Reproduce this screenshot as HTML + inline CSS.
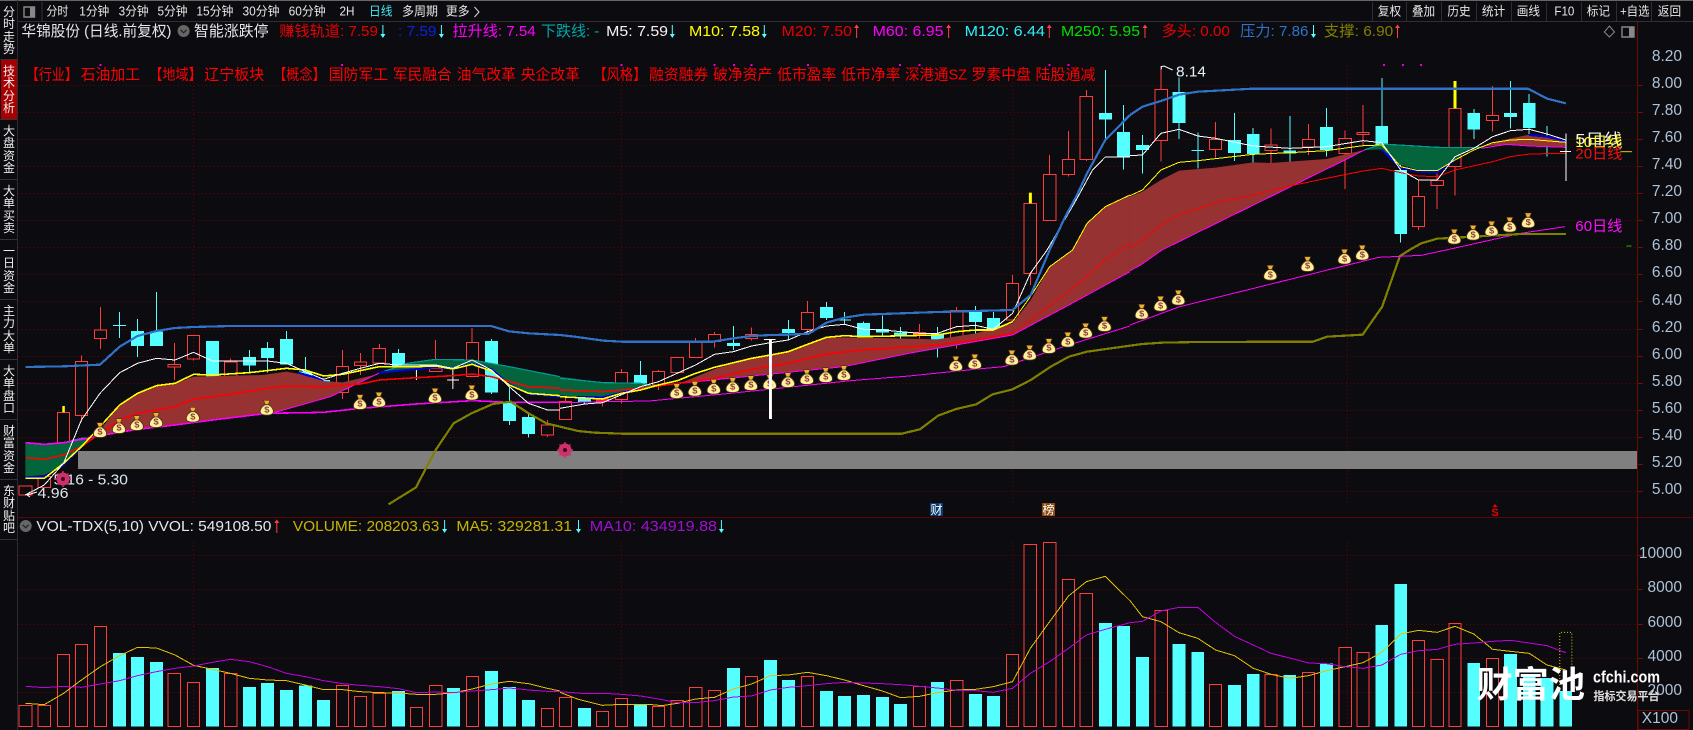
<!DOCTYPE html>
<html><head><meta charset="utf-8"><title>K</title>
<style>
html,body{margin:0;padding:0;background:#0c0c10;width:1693px;height:730px;overflow:hidden}
svg{position:absolute;left:0;top:0;font-family:"Liberation Sans","Noto Sans CJK SC",sans-serif}
path,polyline,polygon,line,rect,circle{vector-effect:non-scaling-stroke}
.side{position:absolute;left:3px;width:12px;font:12px/12.3px "Liberation Sans","Noto Sans CJK SC",sans-serif;color:#eee;text-align:center}
.r{fill:none;stroke:#ff3c3c;stroke-width:1;shape-rendering:crispEdges}
.rf{fill:#ff2020;stroke:#ff3c3c;stroke-width:1;shape-rendering:crispEdges}
.c{fill:#55ffff;stroke:none;shape-rendering:crispEdges}
.w{fill:none;stroke:#55ffff;stroke-width:1;shape-rendering:crispEdges}
.l{fill:none;stroke-linejoin:round;shape-rendering:crispEdges}
.bl{stroke:#2f72c8;stroke-width:2.2}.wh{stroke:#fff;stroke-width:1}.ye{stroke:#ffff00;stroke-width:1}.re{stroke:#ff0000;stroke-width:1}.ma{stroke:#ff00ff;stroke-width:1}.ol{stroke:#808000;stroke-width:2.2}.db{stroke:#0000e0;stroke-width:2}.te{stroke:#009a9a;stroke-width:1.2}
.th{stroke-width:1.6}
.v5{stroke:#e6c000;stroke-width:1}.v10{stroke:#c000e0;stroke-width:1}
.br{fill:#963232}.gr{fill:#04643c}
.b{fill:#fff09a;stroke:#4a3015;stroke-width:.8}.k{fill:#f0b030;stroke:#4a3015;stroke-width:.6}
.d{fill:#8a3a3a;font-size:26px;font-weight:bold;text-anchor:middle}
.gh{stroke:#6a0404;stroke-width:1;stroke-dasharray:1 3;fill:none}
.tb{fill:#e6e6e6;font-size:12.5px}
.t2{font-size:15px}
.t3{font-size:15px;fill:#ff0000}
.ax{fill:#aec2d8;font-size:15.5px;text-anchor:end}
</style></head><body>
<svg width="1693" height="730" viewBox="0 0 1693 730" xmlns="http://www.w3.org/2000/svg">
<rect x="0" y="0" width="1693" height="730" fill="#0c0c10"/>
<rect x="0" y="0" width="1693" height="1" fill="#666"/>
<rect x="17" y="21" width="1676" height="1" fill="#303034"/>
<rect x="17" y="0" width="1" height="730" fill="#2c2c30"/>
<rect x="1" y="59.5" width="16" height="60" fill="#a80000"/>
<path d="M0 59.5H17M0 119.5H17M0 179.5H17M0 239.5H17M0 299.5H17M0 359.5H17M0 419.5H17M0 479.5H17M0 539.5H17" stroke="#333" fill="none"/>
<rect x="41.5" y="2" width="1" height="19" fill="#333"/>
<path d="M24 7H34.5V17H24Z" fill="none" stroke="#888" stroke-width="1.4"/><rect x="30" y="7" width="4.5" height="10" fill="#888"/>

<!-- grid -->
<path class="gh" d="M18 85.5H1637M18 112.5H1637M18 139.5H1637M18 166.5H1637M18 193.5H1637M18 220.5H1637M18 247.5H1637M18 274.5H1637M18 301.5H1637M18 329.5H1637M18 356.5H1637M18 383.5H1637M18 410.5H1637M18 437.5H1637M18 491.5H1637M18 555.5H1637M18 589.5H1637M18 624.5H1637M18 658.5H1637M18 692.5H1637"/>
<path class="gh" d="M193.5 66V503M621.5 66V503M1012.5 66V503M1347.5 66V503M193.5 542V726M621.5 542V726M1012.5 542V726M1347.5 542V726"/>
<rect x="18" y="517" width="1675" height="1" fill="#5a0606"/>
<rect x="1637" y="22" width="1" height="708" fill="#6e0808"/>
<rect x="78" y="451" width="1559" height="18" fill="#808080"/>
<path d="M1638 85.5h5M1638 112.5h5M1638 139.5h5M1638 166.5h5M1638 193.5h5M1638 220.5h5M1638 247.5h5M1638 274.5h5M1638 301.5h5M1638 329.5h5M1638 356.5h5M1638 383.5h5M1638 410.5h5M1638 437.5h5M1638 464.5h5M1638 491.5h5M1638 555.5h5M1638 589.5h5M1638 624.5h5M1638 658.5h5M1638 692.5h5" stroke="#7a0808" fill="none"/>

<!-- candles G1 lower -->
<g transform="translate(0,250) scale(.35714,.33333)">
<path class="r" d="M53 708H89V735H53ZM107 679H142V713H107ZM161 487H195V580H161ZM211 334H245V497H211ZM228 316V334M228 497V516M264 240H298V266H264ZM281 171V240M281 266V297M471 343H505V351H471ZM488 279V343M488 351V390M525 256H559V327H525ZM542 327V331M628 336H663V380H628ZM645 325V336M942 349H976V428H942ZM959 300V349M959 428V447M992 336H1026V347H992ZM1009 309V336M1009 347V375M1045 295H1080V339H1045ZM1062 282V295M1202 355H1237V365H1202ZM1219 270V355M1306 277H1340V380H1306ZM1322 234V277M1516 525H1550V555H1516ZM1533 510V525M1533 555V561"/>
<path class="c" d="M367 243H403V288H367ZM420 245H456V288H420ZM577 273H613V400H577ZM680 321H717V347H680ZM731 294H767V324H731ZM784 267H820V343H784ZM837 365H873V385H837ZM888 390H924V443H888ZM1098 309H1134V350H1098ZM1358 273H1394V427H1358ZM1408 455H1445V513H1408ZM1462 501H1498V552H1462Z"/>
<path class="w" d="M334 186V264M316 226H353M385 207V321M438 126V245M698 300V368M749 276V368M802 243V267M855 321V365M1116 297V309M1376 267V273M1376 427V432M1426 410V455M1426 513V525M1480 490V501M1480 552V563"/>
<path d="M1166 360V390M1268 360V417M1252 390H1285" stroke="#fff" fill="none" stroke-width="1"/>
<path d="M178 468V487" stroke="#ffff00" stroke-width="2.5"/>
</g>
<!-- candles G2 lower -->
<g transform="translate(560,250) scale(.3635,.33333)">
<path class="r" d="M-2 455H32V508H-2ZM15 440V455M152 367H186V449H152ZM169 357V367M169 449V460M254 364H288V405H254ZM271 360V364M271 405V420M306 322H340V368H306ZM356 276H390V323H356ZM373 264V276M408 253H442V275H408ZM425 246V253M425 275V293M510 253H544V266H510ZM527 232V253M527 266V272M664 187H698V239H664ZM681 153V187M681 239V248M1074 181H1108V270H1074ZM1091 171V181M1091 270V296M1228 100H1262V210H1228ZM1245 75V100M117 455V470M989 222V265"/>
<path class="rf" d="M100 447H134V455H100ZM972 248H1006V255H972Z"/>
<path class="c" d="M50 442H85V456H50ZM204 375H240V400H204ZM459 279H495V288H459ZM611 237H646V249H611ZM715 171H751V204H715ZM817 219H853V263H817ZM869 237H905V248H869ZM919 248H955V255H919ZM1021 250H1056V270H1021ZM1125 186H1161V216H1125ZM1175 204H1210V238H1175Z"/>
<path class="w" d="M68 456V462M222 333V375M477 228V279M477 288V300M628 210V237M628 249V270M733 156V171M733 204V210M783 186V225M765 210H801M835 215V219M887 196V237M887 248V260M937 231V248M937 255V265M1038 231V250M1038 270V323M1143 168V186M1143 216V250M1192 186V204"/>
</g>
<!-- candles G2 top -->
<g transform="translate(560,0) scale(.3635,.33333)">
<path class="r" d="M1277 610H1311V820H1277ZM1294 820V855M1330 523H1364V661H1330ZM1347 465V523M1382 478H1416V523H1382ZM1399 393V478M1399 523V530M1431 289H1465V478H1431ZM1448 270V289M1448 478V483"/>
<path d="M1294 578V610" stroke="#ffff00" stroke-width="3"/>
<path class="c" d="M1483 339H1518V359H1483ZM1532 396H1568V471H1532Z"/>
<path class="w" d="M1500 210V339M1500 359V418M1550 315V396M1550 471V508"/>
</g>
<!-- candles G3 top -->
<g transform="translate(1130,0) scale(.35518,.33333)">
<path class="r" d="M70 268H105V421H70ZM87 198V268M87 421V485M224 418H258V449H224ZM241 366V418M241 449V472M380 435H414V452H380ZM397 385V435M397 452V489M486 418H520V441H486ZM503 372V418M503 441V465M589 415H623V460H589ZM606 392V415M606 460V567M639 397H673V404H639ZM656 315V397M656 404V440M795 589H829V680H795ZM812 540V589M812 680V690M848 541H882V557H848ZM865 520V541M865 557V627M898 325H932V500H898ZM915 500V587M1004 346H1038V362H1004ZM1021 258V346M1021 362V395"/>
<path class="c" d="M17 435H53V450H17ZM120 276H156V369H120ZM276 420H312V459H276ZM329 402H365V462H329ZM432 452H468V460H432ZM535 381H571V450H535ZM691 378H727V440H691ZM744 510H780V702H744ZM950 339H986V389H950ZM1053 339H1089V351H1053ZM1106 309H1142V384H1106Z"/>
<path class="w" d="M35 405V435M35 450V521M138 232V276M138 369V417M191 397V505M173 451H209M294 339V420M294 459V483M347 384V402M347 462V487M450 348V452M450 460V487M553 324V381M553 450V470M709 234V378M762 490V510M762 702V728M968 327V339M968 389V417M1071 243V339M1071 351V385M1124 282V309M1124 384V402M1174 378V470"/>
<path d="M915 243V325" stroke="#ffff00" stroke-width="3"/>
<path d="M1380 455H1413" stroke="#d0d020" stroke-width="1"/>
<path d="M1398 738H1412" stroke="#00c000" stroke-width="1"/>
</g>

<!-- fills + lines G1 -->
<g transform="translate(0,250) scale(.35714,.33333)">
<polygon class="gr" points="71,578 124,583 178,578 228,566 250,565 228,590 178,645 124,675 71,680"/>
<polygon class="br" points="262,565 335,465 385,430 438,407 490,400 542,380 735,375 802,365 855,375 906,393 960,397 1060,372 925,440 770,487 560,515 385,538 280,557"/>
<polygon class="gr" points="1060,370 1140,340 1219,328 1322,330 1426,350 1568,380 1568,437 1480,432 1426,405 1376,360 1322,345 1268,357 1219,352 1140,362"/>
<polyline class="l te" points="178,578 228,565 250,565"/><polyline class="l te" points="1060,370 1140,340 1219,328 1322,330 1426,350 1568,380"/>
<polyline class="l db" points="71,682 124,680 178,645 228,590"/><polyline class="l db" points="835,368 906,390"/><polyline class="l db" points="1060,368 1140,360 1219,352 1268,355 1322,342 1376,358 1426,403 1480,432 1568,440"/>
<polyline class="l ma th" points="71,578 124,583 178,578 228,568 280,557 385,538 490,525 595,510 749,490 906,487 1009,475 1166,462 1322,452 1426,457 1568,457"/>
<polyline class="l ma" points="770,487 925,440 1060,370"/>
<polyline class="l re th" points="71,623 124,628 178,615 228,590 280,550 335,510 385,490 438,480 490,470 542,447 645,433 749,415 802,408 906,410 1009,402 1062,390 1166,383 1268,377 1322,372 1376,380 1480,410 1568,415"/>
<polyline class="l ye th" points="71,685 124,685 178,640 228,590 280,530 335,465 385,430 438,407 490,400 542,373 595,375 698,368 802,355 855,360 906,378 959,373 1062,350 1166,350 1219,348 1268,357 1322,343 1376,363 1426,405 1480,430 1568,437"/>
<polyline class="l wh" points="71,735 124,705 178,640 228,510 280,430 335,368 385,340 438,325 490,330 542,307 595,333 749,333 802,340 855,365 906,388 959,370 1009,355 1062,340 1116,345 1219,345 1268,355 1322,330 1376,360 1426,410 1480,460 1533,480 1568,480"/>
<polyline class="l bl" points="71,351 178,349 280,344 335,290 385,258 438,243 490,234 542,231 645,228 1375,228 1425,244 1480,250 1568,255"/>
<polyline class="l ol" points="1088,763 1165,712 1190,660 1220,600 1270,520 1320,490 1380,462 1430,455 1480,490 1530,520 1568,530"/>
</g>
<!-- fills + lines G2 -->
<g transform="translate(560,250) scale(.3635,.33333)">
<polygon class="gr" points="0,380 120,398 222,400 260,410 222,418 117,440 0,438"/>
<polygon class="br" points="330,400 430,355 527,325 628,305 733,262 783,262 1038,268 1143,250 1245,220 1295,150 1347,50 1410,0 1450,-80 1500,-130 1568,-165 1568,65 1400,165 1245,255 960,310 780,350 600,370"/>
<polyline class="l te" points="0,385 120,398 222,400 260,410"/>
<polyline class="l db" points="0,440 117,442 169,428 222,418"/>
<polyline class="l ma" points="0,458 130,455 245,453 450,432 600,415 800,392 960,378 1140,358 1220,350 1400,285 1568,228"/>
<polyline class="l ma" points="330,400 600,370 780,350 960,310 1245,255 1400,165 1568,65"/>
<polyline class="l re th" points="0,420 117,425 222,415 323,400 425,385 527,358 628,340 733,312 835,300 1038,285 1143,270 1245,250"/><polyline class="l re" points="1245,250 1295,210 1400,125 1500,30 1568,-20"/>
<polyline class="l ye th" points="0,440 117,447 169,430 222,420 271,405 323,392 373,370 425,352 527,325 579,315 628,305 681,283 733,262 783,257 835,260 1038,255 1091,245 1143,240 1192,240 1245,215"/><polyline class="l ye" points="1245,215 1294,140 1347,50 1410,0 1450,-80 1500,-130 1568,-165"/>
<polyline class="l wh" points="0,475 68,462 117,458 222,410 271,395 373,345 425,313 477,305 527,288 579,278 628,270 681,245 733,228 783,223 835,238 887,240 989,250 1038,250 1091,230 1143,226 1192,238 1245,190 1294,70 1340,0 1420,-150 1465,-240 1500,-279 1568,-279"/>
<polyline class="l bl" points="0,255 40,260 120,272 170,275 420,275 477,265 527,258 579,255 628,254 685,251 733,218 783,203 835,194 1038,186 1245,180 1295,135 1347,0 1390,-100 1420,-160 1450,-230 1500,-330 1568,-405"/>
<polyline class="l ol" points="0,530 50,543 95,548 170,551 940,551 990,538 1040,497 1090,477 1145,463 1190,433 1245,418 1295,390 1350,350 1400,320 1450,305 1568,287"/>
</g>
<!-- fills + lines G3 -->
<g transform="translate(1130,0) scale(.35518,.33333)">
<polygon class="br" points="0,590 35,575 87,540 138,512 241,503 347,487 397,489 450,485 553,477 606,463 660,450 605,480 90,750 30,795 0,812"/>
<polygon class="gr" points="660,450 709,432 790,437 865,442 965,442 995,440 960,445 915,478 865,512 812,510 762,495 709,448"/>
<polygon class="br" points="990,440 1060,418 1124,404 1174,410 1227,428 1227,440 1124,438 1060,433"/>
<polyline class="l te" points="660,450 709,432 790,437 865,442 965,443 995,440"/>
<polyline class="l db" points="709,450 762,503 812,515 865,517 915,480"/><polyline class="l db" points="1124,405 1174,410 1227,424"/>
<polyline class="l ma" points="0,812 30,795 90,750 605,480 660,450"/>
<polyline class="l ma" points="890,750 1100,700 1225,680"/>
<polyline class="l ma" points="990,445 1060,433 1124,438 1227,442"/>
<polyline class="l re" points="0,745 35,720 87,675 138,645 241,608 347,585 450,558 553,535 656,513 709,505 762,518 812,528 865,530 915,510 1021,485 1071,470 1124,462 1227,460"/>
<polyline class="l ye" points="0,587 35,570 87,510 138,487 191,482 347,463 450,458 553,452 656,437 709,435 762,500 812,512 865,512 915,480 968,450 1021,428 1071,420 1124,418 1227,427"/>
<polyline class="l wh" points="0,467 35,465 87,400 138,388 191,408 241,415 347,438 450,445 553,440 656,422 709,428 762,510 812,540 865,540 915,470 968,445 1021,410 1071,392 1124,388 1174,402 1227,420"/>
<polyline class="l bl" points="0,345 35,320 87,303 138,284 191,275 347,266 1120,266 1175,296 1227,310"/>
<polyline class="l ol" points="790,748 820,730 865,716 1100,702 1227,702"/>
<polyline class="l ol" points="0,1037 35,1032 90,1028 190,1026 515,1025 555,1010 605,1007 655,1004 710,920 760,768 790,748"/>
<polyline class="l ma" points="0,975 140,920 215,900 500,825 700,772 820,766 890,750"/>
<path d="M1227 400V543M1210 455H1242" stroke="#fff" fill="none" stroke-width="1" shape-rendering="crispEdges"/>
<path d="M88 208V200L96 198L120 210" stroke="#fff" fill="none" stroke-width="1"/>
</g>

<!-- money bags G1 -->
<g transform="translate(0,250) scale(.35714,.33333)">
<g transform="translate(280,542)"><path class="k" d="M-9-24H9L4-11H-4Z"/><path class="b" d="M-5-11H5C16-4 20 6 18 13C15 23-15 23-18 13C-20 6-16-4-5-11Z"/><text class="d" y="12">$</text></g>
<g transform="translate(333,530)"><path class="k" d="M-9-24H9L4-11H-4Z"/><path class="b" d="M-5-11H5C16-4 20 6 18 13C15 23-15 23-18 13C-20 6-16-4-5-11Z"/><text class="d" y="12">$</text></g>
<g transform="translate(383,521)"><path class="k" d="M-9-24H9L4-11H-4Z"/><path class="b" d="M-5-11H5C16-4 20 6 18 13C15 23-15 23-18 13C-20 6-16-4-5-11Z"/><text class="d" y="12">$</text></g>
<g transform="translate(437,512)"><path class="k" d="M-9-24H9L4-11H-4Z"/><path class="b" d="M-5-11H5C16-4 20 6 18 13C15 23-15 23-18 13C-20 6-16-4-5-11Z"/><text class="d" y="12">$</text></g>
<g transform="translate(540,496)"><path class="k" d="M-9-24H9L4-11H-4Z"/><path class="b" d="M-5-11H5C16-4 20 6 18 13C15 23-15 23-18 13C-20 6-16-4-5-11Z"/><text class="d" y="12">$</text></g>
<g transform="translate(747,475)"><path class="k" d="M-9-24H9L4-11H-4Z"/><path class="b" d="M-5-11H5C16-4 20 6 18 13C15 23-15 23-18 13C-20 6-16-4-5-11Z"/><text class="d" y="12">$</text></g>
<g transform="translate(1008,458)"><path class="k" d="M-9-24H9L4-11H-4Z"/><path class="b" d="M-5-11H5C16-4 20 6 18 13C15 23-15 23-18 13C-20 6-16-4-5-11Z"/><text class="d" y="12">$</text></g>
<g transform="translate(1061,451)"><path class="k" d="M-9-24H9L4-11H-4Z"/><path class="b" d="M-5-11H5C16-4 20 6 18 13C15 23-15 23-18 13C-20 6-16-4-5-11Z"/><text class="d" y="12">$</text></g>
<g transform="translate(1218,439)"><path class="k" d="M-9-24H9L4-11H-4Z"/><path class="b" d="M-5-11H5C16-4 20 6 18 13C15 23-15 23-18 13C-20 6-16-4-5-11Z"/><text class="d" y="12">$</text></g>
<g transform="translate(1321,430)"><path class="k" d="M-9-24H9L4-11H-4Z"/><path class="b" d="M-5-11H5C16-4 20 6 18 13C15 23-15 23-18 13C-20 6-16-4-5-11Z"/><text class="d" y="12">$</text></g>
</g>
<!-- money bags G2 -->
<g transform="translate(560,250) scale(.3635,.33333)">
<g transform="translate(321,425)"><path class="k" d="M-9-24H9L4-11H-4Z"/><path class="b" d="M-5-11H5C16-4 20 6 18 13C15 23-15 23-18 13C-20 6-16-4-5-11Z"/><text class="d" y="12">$</text></g>
<g transform="translate(371,418)"><path class="k" d="M-9-24H9L4-11H-4Z"/><path class="b" d="M-5-11H5C16-4 20 6 18 13C15 23-15 23-18 13C-20 6-16-4-5-11Z"/><text class="d" y="12">$</text></g>
<g transform="translate(423,412)"><path class="k" d="M-9-24H9L4-11H-4Z"/><path class="b" d="M-5-11H5C16-4 20 6 18 13C15 23-15 23-18 13C-20 6-16-4-5-11Z"/><text class="d" y="12">$</text></g>
<g transform="translate(475,407)"><path class="k" d="M-9-24H9L4-11H-4Z"/><path class="b" d="M-5-11H5C16-4 20 6 18 13C15 23-15 23-18 13C-20 6-16-4-5-11Z"/><text class="d" y="12">$</text></g>
<g transform="translate(525,401)"><path class="k" d="M-9-24H9L4-11H-4Z"/><path class="b" d="M-5-11H5C16-4 20 6 18 13C15 23-15 23-18 13C-20 6-16-4-5-11Z"/><text class="d" y="12">$</text></g>
<g transform="translate(577,398)"><path class="k" d="M-9-24H9L4-11H-4Z"/><path class="b" d="M-5-11H5C16-4 20 6 18 13C15 23-15 23-18 13C-20 6-16-4-5-11Z"/><text class="d" y="12">$</text></g>
<g transform="translate(627,392)"><path class="k" d="M-9-24H9L4-11H-4Z"/><path class="b" d="M-5-11H5C16-4 20 6 18 13C15 23-15 23-18 13C-20 6-16-4-5-11Z"/><text class="d" y="12">$</text></g>
<g transform="translate(679,383)"><path class="k" d="M-9-24H9L4-11H-4Z"/><path class="b" d="M-5-11H5C16-4 20 6 18 13C15 23-15 23-18 13C-20 6-16-4-5-11Z"/><text class="d" y="12">$</text></g>
<g transform="translate(731,377)"><path class="k" d="M-9-24H9L4-11H-4Z"/><path class="b" d="M-5-11H5C16-4 20 6 18 13C15 23-15 23-18 13C-20 6-16-4-5-11Z"/><text class="d" y="12">$</text></g>
<g transform="translate(781,371)"><path class="k" d="M-9-24H9L4-11H-4Z"/><path class="b" d="M-5-11H5C16-4 20 6 18 13C15 23-15 23-18 13C-20 6-16-4-5-11Z"/><text class="d" y="12">$</text></g>
<g transform="translate(1089,343)"><path class="k" d="M-9-24H9L4-11H-4Z"/><path class="b" d="M-5-11H5C16-4 20 6 18 13C15 23-15 23-18 13C-20 6-16-4-5-11Z"/><text class="d" y="12">$</text></g>
<g transform="translate(1141,337)"><path class="k" d="M-9-24H9L4-11H-4Z"/><path class="b" d="M-5-11H5C16-4 20 6 18 13C15 23-15 23-18 13C-20 6-16-4-5-11Z"/><text class="d" y="12">$</text></g>
<g transform="translate(1243,325)"><path class="k" d="M-9-24H9L4-11H-4Z"/><path class="b" d="M-5-11H5C16-4 20 6 18 13C15 23-15 23-18 13C-20 6-16-4-5-11Z"/><text class="d" y="12">$</text></g>
<g transform="translate(1292,310)"><path class="k" d="M-9-24H9L4-11H-4Z"/><path class="b" d="M-5-11H5C16-4 20 6 18 13C15 23-15 23-18 13C-20 6-16-4-5-11Z"/><text class="d" y="12">$</text></g>
<g transform="translate(1345,290)"><path class="k" d="M-9-24H9L4-11H-4Z"/><path class="b" d="M-5-11H5C16-4 20 6 18 13C15 23-15 23-18 13C-20 6-16-4-5-11Z"/><text class="d" y="12">$</text></g>
<g transform="translate(1397,271)"><path class="k" d="M-9-24H9L4-11H-4Z"/><path class="b" d="M-5-11H5C16-4 20 6 18 13C15 23-15 23-18 13C-20 6-16-4-5-11Z"/><text class="d" y="12">$</text></g>
<g transform="translate(1446,244)"><path class="k" d="M-9-24H9L4-11H-4Z"/><path class="b" d="M-5-11H5C16-4 20 6 18 13C15 23-15 23-18 13C-20 6-16-4-5-11Z"/><text class="d" y="12">$</text></g>
<g transform="translate(1498,224)"><path class="k" d="M-9-24H9L4-11H-4Z"/><path class="b" d="M-5-11H5C16-4 20 6 18 13C15 23-15 23-18 13C-20 6-16-4-5-11Z"/><text class="d" y="12">$</text></g>
<!-- white doji over the bags -->
<rect x="575" y="268" width="8" height="239" fill="#fff"/><rect x="561" y="267" width="32" height="3" fill="#fff"/>
</g>
<!-- money bags G3 -->
<g transform="translate(1130,250) scale(.35518,.33333)">
<g transform="translate(33,187)"><path class="k" d="M-9-24H9L4-11H-4Z"/><path class="b" d="M-5-11H5C16-4 20 6 18 13C15 23-15 23-18 13C-20 6-16-4-5-11Z"/><text class="d" y="12">$</text></g>
<g transform="translate(86,163)"><path class="k" d="M-9-24H9L4-11H-4Z"/><path class="b" d="M-5-11H5C16-4 20 6 18 13C15 23-15 23-18 13C-20 6-16-4-5-11Z"/><text class="d" y="12">$</text></g>
<g transform="translate(136,145)"><path class="k" d="M-9-24H9L4-11H-4Z"/><path class="b" d="M-5-11H5C16-4 20 6 18 13C15 23-15 23-18 13C-20 6-16-4-5-11Z"/><text class="d" y="12">$</text></g>
<g transform="translate(395,70)"><path class="k" d="M-9-24H9L4-11H-4Z"/><path class="b" d="M-5-11H5C16-4 20 6 18 13C15 23-15 23-18 13C-20 6-16-4-5-11Z"/><text class="d" y="12">$</text></g>
<g transform="translate(500,44)"><path class="k" d="M-9-24H9L4-11H-4Z"/><path class="b" d="M-5-11H5C16-4 20 6 18 13C15 23-15 23-18 13C-20 6-16-4-5-11Z"/><text class="d" y="12">$</text></g>
<g transform="translate(604,22)"><path class="k" d="M-9-24H9L4-11H-4Z"/><path class="b" d="M-5-11H5C16-4 20 6 18 13C15 23-15 23-18 13C-20 6-16-4-5-11Z"/><text class="d" y="12">$</text></g>
<g transform="translate(654,10)"><path class="k" d="M-9-24H9L4-11H-4Z"/><path class="b" d="M-5-11H5C16-4 20 6 18 13C15 23-15 23-18 13C-20 6-16-4-5-11Z"/><text class="d" y="12">$</text></g>
<g transform="translate(913,-38)"><path class="k" d="M-9-24H9L4-11H-4Z"/><path class="b" d="M-5-11H5C16-4 20 6 18 13C15 23-15 23-18 13C-20 6-16-4-5-11Z"/><text class="d" y="12">$</text></g>
<g transform="translate(966,-50)"><path class="k" d="M-9-24H9L4-11H-4Z"/><path class="b" d="M-5-11H5C16-4 20 6 18 13C15 23-15 23-18 13C-20 6-16-4-5-11Z"/><text class="d" y="12">$</text></g>
<g transform="translate(1018,-62)"><path class="k" d="M-9-24H9L4-11H-4Z"/><path class="b" d="M-5-11H5C16-4 20 6 18 13C15 23-15 23-18 13C-20 6-16-4-5-11Z"/><text class="d" y="12">$</text></g>
<g transform="translate(1069,-74)"><path class="k" d="M-9-24H9L4-11H-4Z"/><path class="b" d="M-5-11H5C16-4 20 6 18 13C15 23-15 23-18 13C-20 6-16-4-5-11Z"/><text class="d" y="12">$</text></g>
<g transform="translate(1121,-87)"><path class="k" d="M-9-24H9L4-11H-4Z"/><path class="b" d="M-5-11H5C16-4 20 6 18 13C15 23-15 23-18 13C-20 6-16-4-5-11Z"/><text class="d" y="12">$</text></g>
</g>

<!-- volume -->
<g transform="translate(0,510) scale(.35714,.33333)">
<path class="r" d="M53 586H89V650H53ZM107 586H142V650H107ZM161 433H195V650H161ZM211 403H245V650H211ZM264 349H298V650H264ZM471 490H505V650H471ZM525 517H559V650H525ZM628 490H663V650H628ZM942 526H976V650H942ZM992 559H1026V650H992ZM1045 550H1080V650H1045ZM1149 592H1183V650H1149ZM1202 526H1237V650H1202ZM1306 499H1340V650H1306ZM1516 595H1550V650H1516Z"/>
<path class="c" d="M316 429H353V650H316ZM367 441H403V650H367ZM420 456H456V650H420ZM577 474H613V650H577ZM680 531H717V650H680ZM731 519H767V650H731ZM784 540H820V650H784ZM837 527H873V650H837ZM888 570H924V650H888ZM1098 543H1134V650H1098ZM1252 534H1288V650H1252ZM1358 483H1394V650H1358ZM1408 531H1445V650H1408ZM1462 570H1498V650H1462Z"/>
<polyline class="l v5" points="71,580 124,584 178,550 228,510 281,470 335,437 385,412 438,414 490,435 542,466 595,478 645,490 698,505 749,510 802,512 855,525 906,539 959,539 1009,545 1062,548 1116,549 1166,553 1219,553 1268,549 1322,537 1376,522 1426,514 1480,521 1533,535 1568,543"/>
<polyline class="l v10" points="71,529 124,533 178,529 228,532 281,522 335,512 385,497 438,485 490,475 542,468 595,457 645,448 698,455 749,470 802,490 855,500 906,512 959,521 1009,526 1062,530 1116,536 1166,548 1219,546 1268,548 1322,543 1376,539 1426,534 1480,540 1533,544 1568,545"/>
</g>
<g transform="translate(560,510) scale(.3635,.33333)">
<path class="r" d="M-2 562H32V650H-2ZM100 604H134V650H100ZM152 565H186V650H152ZM254 590H288V650H254ZM306 571H340V650H306ZM356 532H390V650H356ZM408 541H442V650H408ZM510 499H544V650H510ZM664 499H698V650H664ZM972 529H1006V650H972ZM1074 511H1108V650H1074ZM1228 433H1262V650H1228ZM1277 103H1311V650H1277ZM1330 97H1364V650H1330ZM1382 208H1416V650H1382ZM1431 250H1465V650H1431Z"/>
<path class="c" d="M50 594H85V650H50ZM204 585H240V650H204ZM459 474H495V650H459ZM561 450H597V650H561ZM611 510H646V650H611ZM715 543H751V650H715ZM765 558H801V650H765ZM817 555H853V650H817ZM869 561H905V650H869ZM919 582H955V650H919ZM1021 516H1056V650H1021ZM1125 552H1161V650H1125ZM1175 558H1210V650H1175ZM1483 339H1518V650H1483ZM1532 348H1568V650H1532Z"/>
<polyline class="l v5" points="0,547 50,568 117,586 169,583 245,583 280,587 323,580 373,567 425,562 477,537 527,522 579,497 628,495 681,487 733,497 783,510 835,527 887,543 937,563 989,559 1038,548 1091,540 1143,538 1192,530 1245,515 1294,415 1347,335 1399,258 1448,215 1500,199 1568,272"/>
<polyline class="l v10" points="0,545 60,550 117,550 169,553 222,558 271,567 323,578 373,578 425,572 477,561 527,558 579,540 628,532 681,527 733,521 783,517 835,519 887,521 937,524 989,529 1038,534 1091,541 1143,542 1192,547 1245,535 1294,490 1347,455 1399,415 1448,375 1500,358 1568,338"/>
</g>
<g transform="translate(1130,510) scale(.35518,.33333)">
<path class="r" d="M71 301H105V650H71ZM224 523H258V650H224ZM380 493H414V650H380ZM486 487H520V650H486ZM589 412H623V650H589ZM639 427H673V650H639ZM795 391H829V650H795ZM848 448H882V650H848ZM898 340H932V650H898ZM1004 445H1038V650H1004Z"/>
<path class="c" d="M17 441H53V650H17ZM120 402H156V650H120ZM173 426H209V650H173ZM276 525H312V650H276ZM329 492H365V650H329ZM432 495H468V650H432ZM535 460H571V650H535ZM691 345H727V650H691ZM744 222H780V650H744ZM950 459H986V650H950ZM1053 432H1089V650H1053ZM1106 500H1142V650H1106ZM1156 504H1192V650H1156ZM1209 543H1245V650H1209Z"/>
<path d="M1210 543V367H1244V543" fill="none" stroke="#d8d800" stroke-width="1" stroke-dasharray="1 2"/>
<polyline class="l v5" points="0,272 35,320 87,335 138,368 191,385 241,420 294,437 347,475 397,493 450,505 503,497 553,482 606,470 656,458 709,427 762,372 812,361 865,367 915,349 968,372 1021,418 1071,424 1124,430 1174,465 1227,480"/>
<polyline class="l v10" points="0,338 35,334 87,303 138,292 191,292 241,337 294,379 347,405 397,430 450,444 503,459 553,461 606,470 656,475 709,465 762,433 812,422 865,418 915,403 968,399 1021,394 1071,391 1124,399 1174,407 1227,428"/>
</g>

<!-- markers -->
<rect x="930" y="503" width="13" height="13" fill="#0a3a70"/><text x="936.5" y="514" fill="#fff" font-size="12" text-anchor="middle">财</text>
<rect x="1042" y="503" width="13" height="13" fill="#8a4a10"/><text x="1048.5" y="514" fill="#fff" font-size="12" text-anchor="middle">榜</text>
<text x="1495" y="516" fill="#f00000" font-size="11" font-weight="bold" text-anchor="middle">S</text><path d="M1495 504l2.5 3h-5Z" fill="#f00000"/>

<text x="53.6" y="484.5" fill="#dbe6ee" font-size="15" textLength="74.3" lengthAdjust="spacingAndGlyphs">5.16 - 5.30</text>
<g><circle cx="63" cy="479" r="6.5" fill="#d0306a"/><circle cx="63" cy="479" r="2" fill="#3a0a20"/><path d="M63 471v2M63 485v2M55 479h2M69 479h2M57.5 473.5l1.5 1.5M67 483l1.5 1.5M57.5 484.5l1.5-1.5M67 475l1.5-1.5" stroke="#d0306a" stroke-width="1.4"/></g>
<g><circle cx="565" cy="450" r="6.5" fill="#d0306a"/><circle cx="565" cy="450" r="2" fill="#3a0a20"/><path d="M565 442v2M565 456v2M557 450h2M571 450h2M559.5 444.5l1.5 1.5M569 454l1.5 1.5M559.5 455.5l1.5-1.5M569 446l1.5-1.5" stroke="#d0306a" stroke-width="1.4"/></g>
<text x="37.5" y="498" fill="#dbe6ee" font-size="15" textLength="31" lengthAdjust="spacingAndGlyphs">4.96</text>
<path d="M27 495L37 492M27 495l3-3M27 495l3 2" stroke="#fff" fill="none"/>
<text x="1176" y="76.5" fill="#e6f2f8" font-size="15" textLength="30" lengthAdjust="spacingAndGlyphs">8.14</text>
<text x="1575.3" y="144" fill="#f4f4f4" font-size="15" textLength="47" lengthAdjust="spacingAndGlyphs">5日线</text>
<text x="1575.3" y="147" fill="#ffff20" font-size="15" textLength="47" lengthAdjust="spacingAndGlyphs">10日线</text>
<text x="1575.3" y="158.5" fill="#f01010" font-size="15" textLength="47" lengthAdjust="spacingAndGlyphs">20日线</text>
<text x="1575.3" y="231" fill="#ff10ff" font-size="15" textLength="47" lengthAdjust="spacingAndGlyphs">60日线</text>

<!-- toolbar -->
<g class="tb">
<text x="46.4" y="15.7" textLength="22" lengthAdjust="spacingAndGlyphs">分时</text>
<text x="79.3" y="15.7" textLength="30" lengthAdjust="spacingAndGlyphs">1分钟</text>
<text x="118.6" y="15.7" textLength="30" lengthAdjust="spacingAndGlyphs">3分钟</text>
<text x="157.5" y="15.7" textLength="30" lengthAdjust="spacingAndGlyphs">5分钟</text>
<text x="196.4" y="15.7" textLength="37" lengthAdjust="spacingAndGlyphs">15分钟</text>
<text x="242.5" y="15.7" textLength="37" lengthAdjust="spacingAndGlyphs">30分钟</text>
<text x="288.6" y="15.7" textLength="37" lengthAdjust="spacingAndGlyphs">60分钟</text>
<text x="339.5" y="15.7" textLength="15" lengthAdjust="spacingAndGlyphs">2H</text>
<text x="369" y="15.7" textLength="23.5" lengthAdjust="spacingAndGlyphs" fill="#40e8f0">日线</text>
<text x="402" y="15.7" textLength="36" lengthAdjust="spacingAndGlyphs">多周期</text>
<text x="445.7" y="15.7" textLength="24" lengthAdjust="spacingAndGlyphs">更多</text>
<path d="M474.5 7L479 12L474.5 17" fill="none" stroke="#ddd"/>
<text x="1377.8" y="15.7" textLength="23.3" lengthAdjust="spacingAndGlyphs">复权</text>
<text x="1411.9" y="15.7" textLength="23.3" lengthAdjust="spacingAndGlyphs">叠加</text>
<text x="1447.4" y="15.7" textLength="23.3" lengthAdjust="spacingAndGlyphs">历史</text>
<text x="1481.9" y="15.7" textLength="23.3" lengthAdjust="spacingAndGlyphs">统计</text>
<text x="1516.7" y="15.7" textLength="23.3" lengthAdjust="spacingAndGlyphs">画线</text>
<text x="1554.4" y="15.7" textLength="20" lengthAdjust="spacingAndGlyphs">F10</text>
<text x="1586.7" y="15.7" textLength="23.3" lengthAdjust="spacingAndGlyphs">标记</text>
<text x="1620" y="15.7" textLength="29.5" lengthAdjust="spacingAndGlyphs">+自选</text>
<text x="1657.8" y="15.7" textLength="23.3" lengthAdjust="spacingAndGlyphs">返回</text>
</g>
<path d="M1372.5 2V21M1406.5 2V21M1441.5 2V21M1476.5 2V21M1511.5 2V21M1546.5 2V21M1581.5 2V21M1616.5 2V21M1651.5 2V21" stroke="#2e2e32" fill="none"/>

<!-- row 2 -->
<g class="t2">
<text x="21.4" y="36" fill="#e4e8ee" textLength="150" lengthAdjust="spacingAndGlyphs">华锦股份 (日线.前复权)</text>
<circle cx="183.6" cy="31" r="6" fill="#666"/><path d="M180.6 29.8L183.6 32.8L186.6 29.8" fill="none" stroke="#222" stroke-width="1.2"/>
<text x="194" y="36" fill="#e4e8ee" textLength="74.6" lengthAdjust="spacingAndGlyphs">智能涨跌停</text>
<text x="279.3" y="36" fill="#e80000" textLength="98.6" lengthAdjust="spacingAndGlyphs">赚钱轨道: 7.59</text>
<text x="398" y="36" fill="#0c20e0" textLength="38.4" lengthAdjust="spacingAndGlyphs">: 7.59</text>
<text x="452.5" y="36" fill="#ff00ff" textLength="83.2" lengthAdjust="spacingAndGlyphs">拉升线: 7.54</text>
<text x="541" y="36" fill="#00a8a8" textLength="58.3" lengthAdjust="spacingAndGlyphs">下跌线: -</text>
<text x="606.2" y="36" fill="#f4f4f4" textLength="61.8" lengthAdjust="spacingAndGlyphs">M5: 7.59</text>
<text x="689" y="36" fill="#ffff00" textLength="71" lengthAdjust="spacingAndGlyphs">M10: 7.58</text>
<text x="781.7" y="36" fill="#e80000" textLength="70.2" lengthAdjust="spacingAndGlyphs">M20: 7.50</text>
<text x="872.6" y="36" fill="#ff00ff" textLength="70.9" lengthAdjust="spacingAndGlyphs">M60: 6.95</text>
<text x="964.6" y="36" fill="#30f0f8" textLength="80.3" lengthAdjust="spacingAndGlyphs">M120: 6.44</text>
<text x="1061" y="36" fill="#00e000" textLength="79" lengthAdjust="spacingAndGlyphs">M250: 5.95</text>
<text x="1161.6" y="36" fill="#e80000" textLength="68.2" lengthAdjust="spacingAndGlyphs">多头: 0.00</text>
<text x="1240.2" y="36" fill="#2f72c8" textLength="68.3" lengthAdjust="spacingAndGlyphs">压力: 7.86</text>
<text x="1323.9" y="36" fill="#808000" textLength="69.3" lengthAdjust="spacingAndGlyphs">支撑: 6.90</text>
</g>
<path d="M382.9 25V35M441.4 25V35M672.3 25V35M764.3 25V35M1313.5 25V35" stroke="#55ffff" fill="none"/>
<path d="M380.4 34H385.4L382.9 38ZM438.9 34H443.9L441.4 38ZM669.8 34H674.8L672.3 38ZM761.8 34H766.8L764.3 38ZM1311 34H1316L1313.5 38Z" fill="#55ffff"/>
<path d="M856.6 27V38M948.6 27V38M1049.3 27V38M1145 27V38M1397.5 27V38" stroke="#ff4040" fill="none"/>
<path d="M854.1 28H859.1L856.6 24.5ZM946.1 28H951.1L948.6 24.5ZM1046.8 28H1051.8L1049.3 24.5ZM1142.5 28H1147.5L1145 24.5ZM1395 28H1400L1397.5 24.5Z" fill="#ff4040"/>
<path d="M1609.4 26L1614.5 32L1609.4 37L1604.3 32Z" fill="none" stroke="#888"/>
<path d="M1622 27H1634V37H1622Z" fill="none" stroke="#888" stroke-width="1.4"/><rect x="1629" y="27" width="5" height="10" fill="#888"/>

<!-- row 3 -->
<g class="t3">
<text x="25.7" y="79.5" textLength="52.2" lengthAdjust="spacingAndGlyphs">【行业】</text>
<text x="80.7" y="79.5" textLength="59.3" lengthAdjust="spacingAndGlyphs">石油加工</text>
<text x="149.3" y="79.5" textLength="52.5" lengthAdjust="spacingAndGlyphs">【地域】</text>
<text x="204.3" y="79.5" textLength="60" lengthAdjust="spacingAndGlyphs">辽宁板块</text>
<text x="273.2" y="79.5" textLength="52.5" lengthAdjust="spacingAndGlyphs">【概念】</text>
<text x="328.6" y="79.5" textLength="59.6" lengthAdjust="spacingAndGlyphs">国防军工</text>
<text x="392.9" y="79.5" textLength="58.9" lengthAdjust="spacingAndGlyphs">军民融合</text>
<text x="456.8" y="79.5" textLength="59.2" lengthAdjust="spacingAndGlyphs">油气改革</text>
<text x="520.7" y="79.5" textLength="59.3" lengthAdjust="spacingAndGlyphs">央企改革</text>
<text x="593.4" y="79.5" textLength="53.1" lengthAdjust="spacingAndGlyphs">【风格】</text>
<text x="649" y="79.5" textLength="59.3" lengthAdjust="spacingAndGlyphs">融资融券</text>
<text x="713" y="79.5" textLength="59.3" lengthAdjust="spacingAndGlyphs">破净资产</text>
<text x="777" y="79.5" textLength="59.3" lengthAdjust="spacingAndGlyphs">低市盈率</text>
<text x="841" y="79.5" textLength="59.6" lengthAdjust="spacingAndGlyphs">低市净率</text>
<text x="905" y="79.5" textLength="62" lengthAdjust="spacingAndGlyphs">深港通SZ</text>
<text x="971.5" y="79.5" textLength="59.5" lengthAdjust="spacingAndGlyphs">罗素中盘</text>
<text x="1035.5" y="79.5" textLength="59.9" lengthAdjust="spacingAndGlyphs">陆股通减</text>
</g>
<path d="M99.5 64h2v2h-2ZM341 64h2v2h-2ZM620.5 64h2v2h-2ZM713.5 64h2v2h-2ZM733 64h2v2h-2ZM750.5 64h2v2h-2ZM807 64h2v2h-2ZM899 64h2v2h-2ZM918.5 64h2v2h-2ZM1048.5 64h2v2h-2ZM1067.5 64h2v2h-2ZM1383 64h2v2h-2ZM1402 64h2v2h-2ZM1420 64h2v2h-2Z" fill="#e000e0"/>

<!-- axis labels -->
<g class="ax">
<text x="1682" y="61">8.20</text><text x="1682" y="88">8.00</text><text x="1682" y="115">7.80</text><text x="1682" y="142">7.60</text><text x="1682" y="169">7.40</text><text x="1682" y="196">7.20</text><text x="1682" y="223">7.00</text><text x="1682" y="250">6.80</text><text x="1682" y="277">6.60</text><text x="1682" y="305">6.40</text><text x="1682" y="332">6.20</text><text x="1682" y="359">6.00</text><text x="1682" y="386">5.80</text><text x="1682" y="413">5.60</text><text x="1682" y="440">5.40</text><text x="1682" y="467">5.20</text><text x="1682" y="494">5.00</text>
<text x="1682" y="558">10000</text><text x="1682" y="592">8000</text><text x="1682" y="627">6000</text><text x="1682" y="661">4000</text><text x="1682" y="695">2000</text><text x="1678" y="723">X100</text>
</g>
<rect x="1638" y="710.5" width="51" height="19" fill="none" stroke="#6e0808"/>

<!-- vol header -->
<circle cx="25.7" cy="526" r="6" fill="#666"/><path d="M22.7 524.8L25.7 527.8L28.7 524.8" fill="none" stroke="#222" stroke-width="1.2"/>
<g class="t2">
<text x="36.4" y="531" fill="#e4e8ee" textLength="235" lengthAdjust="spacingAndGlyphs">VOL-TDX(5,10) VVOL: 549108.50</text>
<text x="292.9" y="531" fill="#c8b400" textLength="146.4" lengthAdjust="spacingAndGlyphs">VOLUME: 208203.63</text>
<text x="456.4" y="531" fill="#c8b400" textLength="115.6" lengthAdjust="spacingAndGlyphs">MA5: 329281.31</text>
<text x="589.8" y="531" fill="#a010d0" textLength="127.2" lengthAdjust="spacingAndGlyphs">MA10: 434919.88</text>
</g>
<path d="M276.8 522V533" stroke="#ff4040"/><path d="M274.3 523H279.3L276.8 519.5Z" fill="#ff4040"/>
<path d="M444.6 520V530M578.5 520V530M721.4 520V530" stroke="#55ffff" fill="none"/>
<path d="M442.1 529H447.1L444.6 533ZM576 529H581L578.5 533ZM718.9 529H723.9L721.4 533Z" fill="#55ffff"/>

<!-- watermark -->
<text x="1476.5" y="697" fill="#fff" font-size="36" font-weight="bold" textLength="108.5" lengthAdjust="spacingAndGlyphs">财富池</text>
<text x="1593" y="682.5" fill="#fff" font-size="17" font-weight="bold" textLength="67" lengthAdjust="spacingAndGlyphs">cfchi.com</text>
<text x="1593.5" y="700" fill="#e0e0e0" font-size="11.5" font-weight="bold" textLength="66" lengthAdjust="spacingAndGlyphs">指标交易平台</text>
</svg>

<div class="side" style="top:6px">分时走势</div>
<div class="side" style="top:65px">技术分析</div>
<div class="side" style="top:125px">大盘资金</div>
<div class="side" style="top:185px">大单买卖</div>
<div class="side" style="top:245px">一日资金</div>
<div class="side" style="top:305px">主力大单</div>
<div class="side" style="top:365px">大单盘口</div>
<div class="side" style="top:425px">财富资金</div>
<div class="side" style="top:485px">东财贴吧</div>
</body></html>
